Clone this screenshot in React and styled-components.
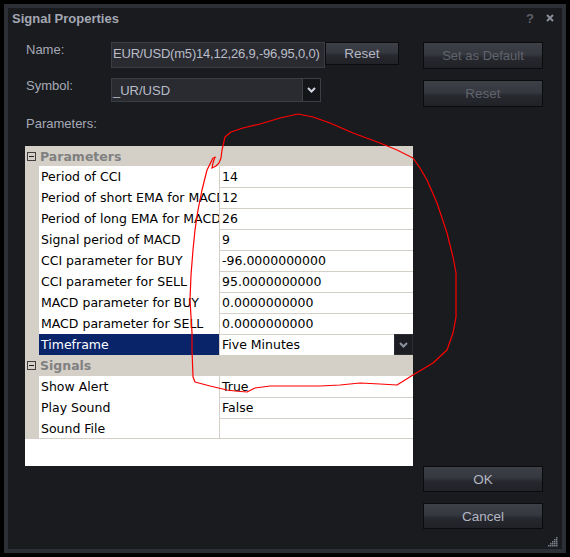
import React from "react";
import styled, { createGlobalStyle } from "styled-components";

const Global = createGlobalStyle`
  html, body { margin: 0; padding: 0; background: #000; }
  body { width: 570px; height: 557px; overflow: hidden; }
  * { box-sizing: border-box; }
`;

const Window = styled.div`
  position: relative;
  width: 570px;
  height: 557px;
  padding: 4px;
  background: #000;
`;

const Frame = styled.div`
  height: 100%;
  border: 4px solid #2d2f36;
  background: #1a1b1f;
  display: flex;
  flex-direction: column;
`;

const TitleBar = styled.div`
  height: 20px;
  display: flex;
  align-items: center;
  padding: 0 8px 0 4px;
  font-family: "Liberation Sans", Arial, sans-serif;
`;

const Title = styled.div`
  flex: 1;
  font-size: 13px;
  font-weight: bold;
  color: #a3a7b3;
`;

const HelpGlyph = styled.span`
  font-size: 13px;
  font-weight: bold;
  color: #5c606a;
  margin-right: 12px;
`;

const Body = styled.div`
  flex: 1;
  display: flex;
  padding: 14px 0 20px 17px;
  gap: 10px;
`;

const LeftCol = styled.div`
  width: 388px;
  display: flex;
  flex-direction: column;
  align-self: flex-start;
`;

const RightCol = styled.div`
  width: 120px;
  display: flex;
  flex-direction: column;
`;

const FieldRow = styled.div`
  display: flex;
  align-items: flex-start;
  margin-top: ${(p) => p.$mt || 0}px;
`;

const Label = styled.div`
  width: 86px;
  padding: 1px 0 0 1px;
  font-family: "Liberation Sans", Arial, sans-serif;
  font-size: 13px;
  line-height: 14px;
  color: #a6aab6;
`;

const TextField = styled.div`
  width: 214px;
  height: 26px;
  background: #2a2b31;
  border: 1px solid #3b3d44;
  padding: 0 1px 3px;
  display: flex;
  align-items: center;
  font-family: "Liberation Sans", Arial, sans-serif;
  font-size: 13px;
  letter-spacing: -0.2px;
  color: #b9bdc9;
  white-space: nowrap;
  overflow: hidden;
`;

const Button = styled.div`
  width: ${(p) => p.$w || 120}px;
  height: ${(p) => p.$h || 26}px;
  margin-top: ${(p) => p.$mt || 0}px;
  border: 1px solid #0b0b0d;
  background: linear-gradient(
    to bottom,
    #3e4048 0%,
    #363840 45%,
    #26282e 60%,
    #202227 100%
  );
  display: flex;
  align-items: center;
  justify-content: center;
  font-family: "Liberation Sans", Arial, sans-serif;
  font-size: ${(p) => p.$fs || 13}px;
  color: ${(p) => (p.$disabled ? "#60646d" : "#b3b7c3")};
`;

const Combo = styled.div`
  width: 210px;
  height: 24px;
  display: flex;
`;

const ComboField = styled.div`
  flex: 1;
  background: #2a2b31;
  border: 1px solid #3b3d44;
  border-right: none;
  display: flex;
  align-items: center;
  padding-left: 1px;
  font-family: "Liberation Sans", Arial, sans-serif;
  font-size: 13px;
  color: #b9bdc9;
`;

const DropButton = styled.div`
  width: ${(p) => p.$w || 19}px;
  height: ${(p) => p.$h || 24}px;
  background: ${(p) => p.$bg || "#141518"};
  border: 1px solid ${(p) => p.$bd || "#3c3e45"};
  display: flex;
  align-items: center;
  justify-content: center;
`;

const ParamsLabel = styled(Label)`
  margin-top: 14px;
  padding-top: 0;
  line-height: 16px;
`;

const Grid = styled.div`
  margin-top: 14px;
  width: 388px;
  height: 320px;
  background: #fff;
  font-family: "DejaVu Sans", Verdana, sans-serif;
  font-size: 12.5px;
  color: #000;
`;

const CategoryRow = styled.div`
  height: ${(p) => p.$h || 21}px;
  background: #d4d0c8;
  display: flex;
  align-items: center;
`;

const ToggleBox = styled.span`
  width: 9px;
  height: 9px;
  margin: 0 4px 0 2px;
  border: 1px solid #404040;
  display: flex;
  align-items: center;
  justify-content: center;
  &::after {
    content: "";
    width: 5px;
    height: 1px;
    background: #202020;
  }
`;

const CategoryLabel = styled.span`
  font-weight: bold;
  font-size: 12.5px;
  color: #808080;
`;

const PropRow = styled.div`
  height: 21px;
  display: grid;
  grid-template-columns: 14px 181px 1fr;
`;

const MarginCell = styled.div`
  background: #d4d0c8;
`;

const NameCell = styled.div`
  border-bottom: 1px solid #d4d0c8;
  border-right: 1px solid #d4d0c8;
  background: ${(p) => (p.$selected ? "#0a246a" : "#fff")};
  color: ${(p) => (p.$selected ? "#fff" : "#000")};
  padding: 1px 0 0 2px;
  white-space: nowrap;
  overflow: hidden;
  line-height: 20px;
`;

const ValueCell = styled.div`
  border-bottom: 1px solid #d4d0c8;
  padding-left: 2px;
  display: flex;
  white-space: nowrap;
`;

const ValueText = styled.span`
  flex: 1;
  padding-top: 1px;
  line-height: 20px;
`;

const Spacer = styled.div`
  flex: 1;
`;

const Overlay = styled.svg`
  position: absolute;
  left: 0;
  top: 0;
  pointer-events: none;
`;

const Grip = styled.svg`
  position: absolute;
  right: 12px;
  bottom: 10px;
`;

const Chevron = ({ color }) => (
  <svg width="9" height="6" viewBox="0 0 9 6">
    <path d="M1 1 L4.5 4.5 L8 1" fill="none" stroke={color} strokeWidth="2" />
  </svg>
);

const params = [
  ["Period of CCI", "14"],
  ["Period of short EMA for MACD", "12"],
  ["Period of long EMA for MACD", "26"],
  ["Signal period of MACD", "9"],
  ["CCI parameter for BUY", "-96.0000000000"],
  ["CCI parameter for SELL", "95.0000000000"],
  ["MACD parameter for BUY", "0.0000000000"],
  ["MACD parameter for SELL", "0.0000000000"],
];

const signals = [
  ["Show Alert", "True"],
  ["Play Sound", "False"],
  ["Sound File", ""],
];

const scribble = [
  [222, 150], [225, 137], [231, 132], [243, 128], [260, 124], [280, 118],
  [298, 114], [313, 117], [330, 123], [353, 133], [380, 143], [397, 150],
  [413, 158], [420, 168], [427, 180], [437, 203], [442, 218], [447, 233],
  [453, 257], [456, 273], [456, 300], [456, 317], [453, 333], [447, 350],
  [433, 363], [413, 375], [397, 385], [380, 384], [360, 383], [340, 385],
  [320, 386], [295, 386], [270, 386], [255, 388], [247, 392], [235, 391],
  [227, 390], [210, 386], [195, 382], [193, 377], [192, 350], [192, 333],
  [190, 300], [191, 275], [193, 250], [195, 230], [198, 210], [202, 190],
  [207, 170], [213, 158], [216, 157],
];

const hook = [
  [222, 150], [221, 158], [219, 163], [216, 166], [212, 168], [213, 163], [215, 157],
];

const gripDots = [
  [8, 0], [6, 2], [8, 2], [4, 4], [6, 4], [8, 4], [2, 6], [4, 6], [6, 6], [8, 6],
  [0, 8], [2, 8], [4, 8], [6, 8], [8, 8],
];

export default function App() {
  return (
    <>
      <Global />
      <Window>
        <Frame>
          <TitleBar>
            <Title>Signal Properties</Title>
            <HelpGlyph>?</HelpGlyph>
            <svg width="8" height="8" viewBox="0 0 8 8">
              <path d="M1 1 L7 7 M7 1 L1 7" stroke="#8a8e98" strokeWidth="2" />
            </svg>
          </TitleBar>
          <Body>
            <LeftCol>
              <FieldRow>
                <Label>Name:</Label>
                <TextField>EUR/USD(m5)14,12,26,9,-96,95,0,0)</TextField>
                <Button $w={74} $h={23} $fs={13.5}>Reset</Button>
              </FieldRow>
              <FieldRow $mt={10}>
                <Label>Symbol:</Label>
                <Combo>
                  <ComboField>_UR/USD</ComboField>
                  <DropButton>
                    <Chevron color="#d2d6e0" />
                  </DropButton>
                </Combo>
              </FieldRow>
              <ParamsLabel>Parameters:</ParamsLabel>
              <Grid>
                <CategoryRow $h={20}>
                  <ToggleBox />
                  <CategoryLabel>Parameters</CategoryLabel>
                </CategoryRow>
                {params.map(([n, v]) => (
                  <PropRow key={n}>
                    <MarginCell />
                    <NameCell>{n}</NameCell>
                    <ValueCell>
                      <ValueText>{v}</ValueText>
                    </ValueCell>
                  </PropRow>
                ))}
                <PropRow>
                  <MarginCell />
                  <NameCell $selected>Timeframe</NameCell>
                  <ValueCell>
                    <ValueText>Five Minutes</ValueText>
                    <DropButton $w={19} $h={21} $bg="#1c1d22" $bd="#2c2d33">
                      <Chevron color="#8d91a0" />
                    </DropButton>
                  </ValueCell>
                </PropRow>
                <CategoryRow>
                  <ToggleBox />
                  <CategoryLabel>Signals</CategoryLabel>
                </CategoryRow>
                {signals.map(([n, v]) => (
                  <PropRow key={n}>
                    <MarginCell />
                    <NameCell>{n}</NameCell>
                    <ValueCell>
                      <ValueText>{v}</ValueText>
                    </ValueCell>
                  </PropRow>
                ))}
              </Grid>
            </LeftCol>
            <RightCol>
              <Button $h={27} $disabled>Set as Default</Button>
              <Button $h={27} $mt={11} $disabled $fs={13.5}>Reset</Button>
              <Spacer />
              <Button $h={26} $fs={13.5}>OK</Button>
              <Button $h={26} $mt={11} $fs={13.5}>Cancel</Button>
            </RightCol>
          </Body>
        </Frame>
        <Grip width="10" height="10" viewBox="0 0 10 10">
          {gripDots.map(([x, y]) => (
            <rect key={`${x}-${y}`} x={x} y={y} width="1.5" height="1.5" fill="#7c808a" />
          ))}
        </Grip>
        <Overlay width="570" height="557" viewBox="0 0 570 557">
          <polyline
            points={scribble.map((p) => p.join(",")).join(" ")}
            fill="none"
            stroke="#ff0000"
            strokeWidth="1.2"
            strokeLinejoin="round"
          />
          <polyline
            points={hook.map((p) => p.join(",")).join(" ")}
            fill="none"
            stroke="#ff0000"
            strokeWidth="1.2"
          />
        </Overlay>
      </Window>
    </>
  );
}
